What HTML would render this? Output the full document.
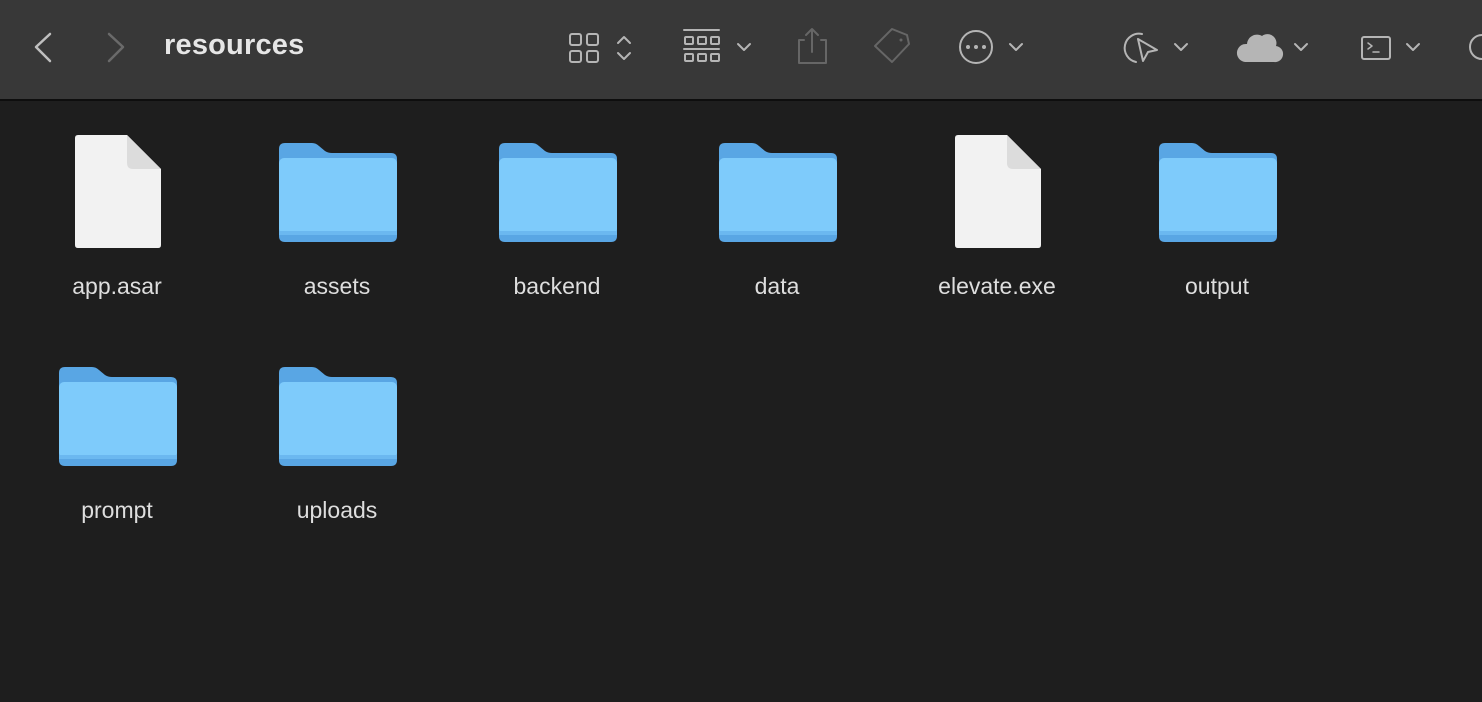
<!DOCTYPE html>
<html><head><meta charset="utf-8"><style>
body{margin:0;width:1482px;height:702px;background:#1e1e1e;overflow:hidden;font-family:"Liberation Sans",sans-serif;position:relative}
.tb{position:absolute;left:0;top:0;width:1482px;height:99px;background:#383838;border-bottom:2px solid #0e0e0e}
.title{position:absolute;left:164px;top:29px;font-size:29px;font-weight:bold;color:#e6e6e6;letter-spacing:0.2px}
.it{position:absolute;width:200px;text-align:center;color:#dedede;font-size:23px}
svg{position:absolute}
</style></head><body>
<div class="tb">
<svg style="left:0;top:0" width="1482" height="99" fill="none" stroke-linecap="round" stroke-linejoin="round">
<path d="M50 34L36 47L50 61" stroke="#bfbfbf" stroke-width="2.5"/>
<path d="M109 34L123 47L109 61" stroke="#6a6a6a" stroke-width="2.5"/>
<g stroke="#b5b5b5" stroke-width="2"><rect x="570" y="34" width="11" height="11" rx="2"/><rect x="587" y="34" width="11" height="11" rx="2"/><rect x="570" y="51" width="11" height="11" rx="2"/><rect x="587" y="51" width="11" height="11" rx="2"/>
<path d="M618 43L624 37L630 43M618 53L624 59L630 53"/>
<path d="M684 30H719"/><rect x="685" y="37" width="8" height="7" rx="1"/><rect x="698" y="37" width="8" height="7" rx="1"/><rect x="711" y="37" width="8" height="7" rx="1"/><path d="M684 49H719"/><rect x="685" y="54" width="8" height="7" rx="1"/><rect x="698" y="54" width="8" height="7" rx="1"/><rect x="711" y="54" width="8" height="7" rx="1"/>
<path d="M738 44L744 50L750 44"/>
<circle cx="976" cy="47" r="16"/><path d="M1010 44L1016 50L1022 44"/>
<path d="M1142 34A14 14 0 1 0 1136 62"/><path d="M1138 39L1157 50L1148 52L1143 61Z"/><path d="M1175 44L1181 50L1187 44"/>
<path d="M1295 44L1301 50L1307 44"/>
<rect x="1362" y="37" width="28" height="22" rx="2"/><path d="M1368 43L1372 46L1368 49M1373 52H1379" stroke-width="1.5"/><path d="M1407 44L1413 50L1419 44"/>
<circle cx="1482" cy="47" r="12"/></g>
<g fill="#b5b5b5"><circle cx="968" cy="47" r="2"/><circle cx="976" cy="47" r="2"/><circle cx="984" cy="47" r="2"/></g>
<g stroke="#666" stroke-width="2"><path d="M804 40H799V63H826V40H821M812 52V29M806 35L812 29L818 35"/><path d="M875 46L892 29L907 35L909 44L892 62Z"/></g>
<circle cx="901" cy="40" r="1.5" fill="#666"/>
<path d="M1245 62H1274A8 8 0 0 0 1276 46A9 9 0 0 0 1262 36A10 10 0 0 0 1247 44A9 9 0 0 0 1245 62Z" fill="#b5b5b5"/>
</svg>
<div class="title">resources</div>
</div>
<svg style="left:0;top:0" width="1482" height="702">
<defs>
<g id="f"><path d="M0 6Q0 0 6 0H33Q37 0 40 3L46 8Q49 10 53 10H112Q118 10 118 16V93Q118 99 112 99H6Q0 99 0 93Z" fill="#59a6e4"/><rect x="0" y="15" width="118" height="76" rx="5" fill="#7ecbfb"/><rect x="0" y="88" width="118" height="4" fill="#6bb8f0"/></g>
<g id="d"><path d="M0 3Q0 0 3 0H52L86 34V110Q86 113 83 113H3Q0 113 0 110Z" fill="#f2f2f2"/><path d="M52 0V28Q52 34 58 34H86Z" fill="#dcdcdc"/></g>
</defs>
<use href="#d" x="75" y="135"/><use href="#f" x="279" y="143"/><use href="#f" x="499" y="143"/><use href="#f" x="719" y="143"/><use href="#d" x="955" y="135"/><use href="#f" x="1159" y="143"/>
<use href="#f" x="59" y="367"/><use href="#f" x="279" y="367"/>
</svg>
<div class="it" style="left:17px;top:273px">app.asar</div>
<div class="it" style="left:237px;top:273px">assets</div>
<div class="it" style="left:457px;top:273px">backend</div>
<div class="it" style="left:677px;top:273px">data</div>
<div class="it" style="left:897px;top:273px">elevate.exe</div>
<div class="it" style="left:1117px;top:273px">output</div>
<div class="it" style="left:17px;top:497px">prompt</div>
<div class="it" style="left:237px;top:497px">uploads</div>
</body></html>
